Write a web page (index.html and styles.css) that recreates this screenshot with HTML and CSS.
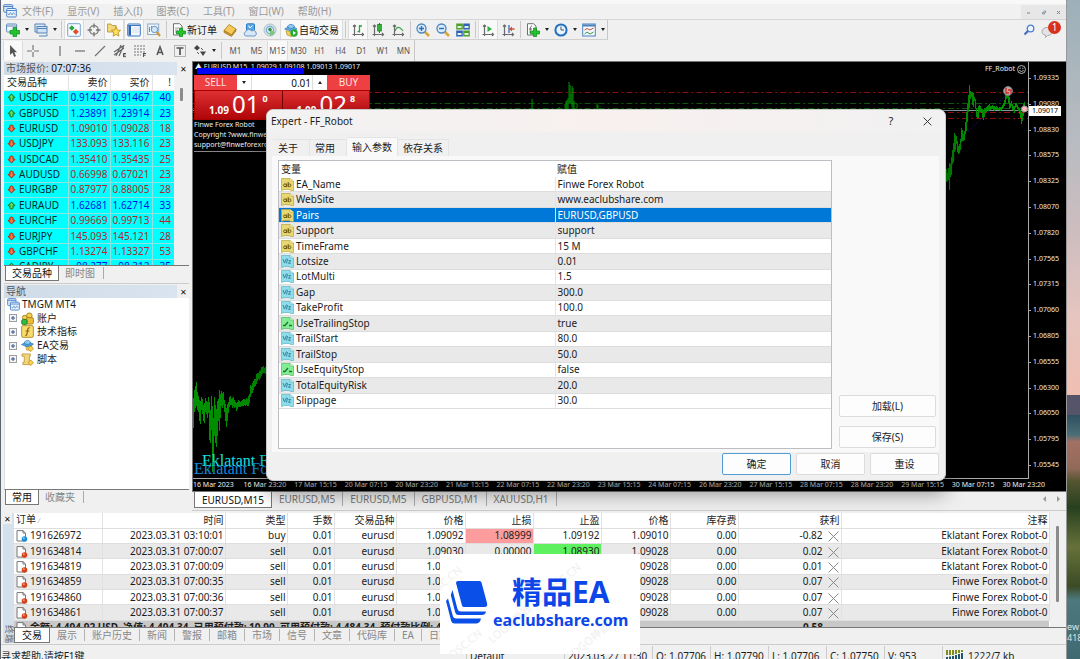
FILE: index.html
```
<!DOCTYPE html>
<html lang="zh-CN">
<head>
<meta charset="utf-8">
<title>TMGM MT4</title>
<link rel="stylesheet" href="styles.css">
</head>
<body>
<svg class="defs" aria-hidden="true">
  <symbol id="up" viewBox="0 0 10 10"><path d="M5 .5 9.5 5 7.5 6.5V8L5 9.7 2.5 8V6.500L.5 5Z" fill="#1c8a2c"/><path d="M5 2 7.500 5H6V8H4V5H2.500Z" fill="#5fe06a"/></symbol>
  <symbol id="down" viewBox="0 0 10 10"><path d="M5 9.500 9.500 5 7.500 3.500V2L5 .3 2.500 2V3.500L.5 5Z" fill="#b03a1c"/><path d="M5 8 7.500 5H6V2H4V5H2.500Z" fill="#ff7a50"/></symbol>
  <symbol id="ab" viewBox="0 0 13 13"><path d="M.5 .5H9L12.500 3V12.500H10L8 11.500H3L.5 12.500Z" fill="#e8d873" stroke="#b9a33c" stroke-width=".7"/><path d="M9 .5V3H12.500" fill="#fff7c0" stroke="#b9a33c" stroke-width=".5"/><circle cx="4" cy="7.300" r="1.400" fill="none" stroke="#6d5c12"/><path d="M5.600 5.500V9.100M7.200 4V9.100" stroke="#6d5c12"/><circle cx="8.500" cy="7.300" r="1.400" fill="none" stroke="#6d5c12"/></symbol>
  <symbol id="va" viewBox="0 0 13 13"><path d="M.5 .5H9L12.500 3V12.500H10L8 11.500H3L.5 12.500Z" fill="#8fdcea" stroke="#5cb4c6" stroke-width=".7"/><path d="M9 .5V3H12.500" fill="#d9f6fb" stroke="#4aa3b6" stroke-width=".5"/><path d="M2 4 3.500 8 5.500 3.500M5.500 8.500 6.500 4M7.500 5.500H9.500L7.500 8.300H9.800" fill="none" stroke="#2a7f96" stroke-width=".9"/></symbol>
  <symbol id="bool" viewBox="0 0 13 13"><path d="M.5 .5H9L12.500 3V12.500H10L8 11.500H3L.5 12.500Z" fill="#84ec94" stroke="#4fb860" stroke-width=".7"/><path d="M9 .5V3H12.500" fill="#d6fbdc" stroke="#4fb860" stroke-width=".5"/><path d="M2 8.500H4L7 5M8 8.500H11" fill="none" stroke="#17772a" stroke-width="1.300"/></symbol>
  <symbol id="buy" viewBox="0 0 12 12"><path d="M1 .6H7L9.500 3V11H1Z" fill="#fff" stroke="#777"/><path d="M7 .6V3H9.500" fill="none" stroke="#777"/><circle cx="8.500" cy="9" r="2.800" fill="#1e8fd8"/><circle cx="7.800" cy="8.200" r=".9" fill="#8ed4ff"/></symbol>
  <symbol id="sell" viewBox="0 0 12 12"><path d="M1 .6H7L9.500 3V11H1Z" fill="#fff" stroke="#777"/><path d="M7 .6V3H9.500" fill="none" stroke="#777"/><circle cx="8.500" cy="9" r="2.800" fill="#d5421b"/><circle cx="7.800" cy="8.200" r=".9" fill="#ffa27e"/></symbol>
  <symbol id="x" viewBox="0 0 10 10"><path d="M.5 .5 9.500 9.500M9.500 .5 .5 9.500" stroke="#888" fill="none" stroke-width=".9"/></symbol>
  <symbol id="plus" viewBox="0 0 8 8"><rect x=".5" y=".5" width="7" height="7" fill="#f4f4f4" stroke="#a0a0a0"/><path d="M2 4H6M4 2V6" stroke="#34549c"/></symbol>
  <symbol id="windows" viewBox="0 0 14 14"><rect x=".7" y=".7" width="9" height="7.500" rx="1" fill="#d7e8fa" stroke="#4f86c6"/><path d="M.7 2.500H9.700" stroke="#4f86c6"/><rect x="3.700" y="4.500" width="9.600" height="8.500" rx="1" fill="#eaf4ff" stroke="#4f86c6"/><path d="M3.700 6.500H13.300" stroke="#4f86c6"/><path d="M5 9.500 6 11 7.500 8.500 9 11 10.500 8.500 12 10.500" fill="none" stroke="#4f86c6" stroke-width=".8"/></symbol>
  <symbol id="axes" viewBox="0 0 14 14"><path d="M3.500 2V11.500H12.500M2 3.500 3.500 2 5 3.500M1.500 11.500H3.500V13M11 10 12.500 11.500 11 13" fill="none" stroke="#6b6b6b" stroke-width="1.200"/></symbol>
</svg>
<div class="desktop">
<div class="app">
  <header class="menubar">
    <svg class="i14"><use href="#windows"/></svg>
    <nav class="menu"><button>文件(F)</button><button>显示(V)</button><button>插入(I)</button><button>图表(C)</button><button>工具(T)</button><button>窗口(W)</button><button>帮助(H)</button></nav>
    <div class="winbtns"><button aria-label="最小化"><svg viewBox="0 0 15 14"><path d="M6 8H9" stroke="#789"/></svg></button><button aria-label="还原"><svg viewBox="0 0 15 14"><path d="M6.500 7.500H8.500V9H6.500ZM7.500 6H9.500V8" fill="none" stroke="#789" stroke-width=".8"/></svg></button><button aria-label="关闭"><svg viewBox="0 0 15 14"><path d="M6 6 9 9M9 6 6 9" stroke="#789"/></svg></button></div>
  </header>

  <div class="tools">
    <div class="bar first">
      <button class="tb" aria-label="新图表"><svg class="i14" viewBox="0 0 14 14"><rect x=".6" y="1" width="10" height="8" rx="1" fill="#eef6ff" stroke="#5f88b4"/><path d="M.6 3H10.600" stroke="#5f88b4"/><path d="M7 4.500H10.500V7.500H13.700V11H10.500V13.800H7V11H4V7.500H7Z" fill="#22c32e" stroke="#0d8a1a" stroke-width=".7"/></svg></button><i class="caret"></i>
      <button class="tb" aria-label="配置"><svg class="i14" viewBox="0 0 14 14"><path d="M1 9V1H11V3" fill="#dcebfb" stroke="#5583b5"/><rect x="3" y="3.500" width="10" height="6.500" fill="#cfe2f8" stroke="#5583b5"/><path d="M3 5.500H13M5 13H13V11M1 9H3" stroke="#5583b5" fill="none"/></svg></button><i class="caret"></i>
      <i class="sep"></i>
      <button class="tb on" aria-label="市场报价"><svg class="i14" viewBox="0 0 14 14"><rect x=".7" y=".7" width="12.600" height="12.600" rx="1" fill="#f6fbff" stroke="#77a3cf"/><path d="M4.800 2.200 7.600 5 4.800 7.800 2 5Z" fill="#26a83a"/><path d="M8.800 5.800 11.800 8.800 8.800 11.800 5.800 8.800Z" fill="#e0502a"/></svg></button>
      <button class="tb" aria-label="数据窗口"><svg class="i14" viewBox="0 0 14 14"><circle cx="7" cy="7" r="4.300" fill="none" stroke="#777" stroke-width="1.300"/><path d="M7 .5V5M7 9V13.500M.5 7H5M9 7H13.500" stroke="#777" stroke-width="1.300"/></svg></button>
      <button class="tb on" aria-label="导航"><svg class="i14" viewBox="0 0 14 14"><path d="M.5 1H4L5 2.500H9V9H.5Z" fill="#f4d87a" stroke="#b98f24" stroke-width=".8"/><path d="M9 3.800 10.400 7 13.600 7.300 11.200 9.600 11.900 13.200 9 11.400 6.100 13.200 6.800 9.600 4.400 7.300 7.600 7Z" fill="#ffe05c" stroke="#b98a12" stroke-width=".8"/></svg></button>
      <button class="tb on" aria-label="终端"><svg class="i14" viewBox="0 0 14 14"><rect x=".7" y="1" width="12.600" height="12" rx="1" fill="#f4f9ff" stroke="#3c78bd"/><path d="M1 2.500H13" stroke="#3c78bd"/><path d="M1.500 3H4V12.500H1.500Z" fill="#2b63b0"/><path d="M5.500 5H12M5.500 7H12M5.500 9H12" stroke="#d8dfe8"/></svg></button>
      <button class="tb" aria-label="策略测试"><svg class="i14" viewBox="0 0 14 14"><rect x=".7" y="1" width="11" height="10.500" fill="#eef5fc" stroke="#8da9c6"/><path d="M2.500 4V9M4.500 3V8" stroke="#789"/><circle cx="7.500" cy="6.500" r="3.200" fill="#cfe6fb" stroke="#6b93bd"/><path d="M9.700 9 13 13" stroke="#d5952a" stroke-width="2"/></svg></button>
      <i class="sep"></i>
      <button class="tb text"><svg class="i14" viewBox="0 0 14 14"><path d="M1.500 .7H7.500L10 3V12H1.500Z" fill="#fff" stroke="#707070"/><path d="M3 5H7M3 7H6M3 9H5" stroke="#999"/><path d="M7.500 5H10.500V8H13.500V11H10.500V13.700H7.500V11H4.500V8H7.500Z" fill="#22c32e" stroke="#0d8a1a" stroke-width=".7"/></svg>新订单</button>
      <button class="tb" aria-label="编辑器"><svg class="i14" viewBox="0 0 14 14"><path d="M1 7.500 6 1.500 13 6 8.500 12Z" fill="#f4c95a" stroke="#ab7a17" stroke-width=".8"/><path d="M1 7.500V9.500L8.500 13.500 13 8V6L8.500 12Z" fill="#d89a26" stroke="#9a6b14" stroke-width=".6"/></svg></button>
      <button class="tb" aria-label="账户"><svg class="i14" viewBox="0 0 14 14"><rect x="3.500" y=".8" width="8" height="7" rx="1" fill="#56a8ea" stroke="#2e78bc"/><path d="M5.500 2.500 7 5 9.500 2.500" stroke="#fff" fill="none"/><path d="M2.500 13A2.500 2.500 0 0 1 3 8.500 3 3 0 0 1 8.500 8 2.500 2.500 0 0 1 12 13Z" fill="#d7e8f8" stroke="#6b97c4"/></svg></button>
      <button class="tb" aria-label="信号"><svg class="i14" viewBox="0 0 14 14"><circle cx="7" cy="7" r="6" fill="#dbe6ec" stroke="#a8bfc8"/><circle cx="7" cy="7" r="3.700" fill="none" stroke="#75aed0" stroke-width="1.200"/><path d="M7 7V13A6 6 0 0 0 12 9Z" fill="#7cc77f"/><circle cx="7" cy="6.500" r="1.700" fill="#2f8f43"/></svg></button>
      <button class="tb text on"><svg class="i14" viewBox="0 0 14 14"><path d="M.7 6 4 4 10 4 13 6 7 8Z" fill="#62aee5" stroke="#2b76b5" stroke-width=".7"/><path d="M3.500 4C4 .5 10 .5 10.500 4L7 6Z" fill="#8dc9f2" stroke="#2b76b5" stroke-width=".7"/><path d="M2 7.500 7 9 12 7 11 12 7 13.500 3 12Z" fill="#f1cf59" stroke="#ad8420" stroke-width=".6"/><circle cx="10" cy="10" r="3.700" fill="#24a93a"/><path d="M9 8 12 10 9 12Z" fill="#fff"/></svg>自动交易</button>
      <i class="sep"></i>
      <button class="tb on" aria-label="柱状图"><svg class="i14" viewBox="0 0 14 14"><use href="#axes"/><path d="M8.500 2V9.500M8.500 3H11M6.500 8.500H8.500" stroke="#2da33c" stroke-width="1.300"/></svg></button>
      <button class="tb" aria-label="蜡烛图"><svg class="i14" viewBox="0 0 14 14"><use href="#axes"/><path d="M8.500 0V10" stroke="#15801f"/><rect x="6.700" y="1.500" width="3.600" height="6.500" fill="#2fb83d" stroke="#15801f" stroke-width=".8"/></svg></button>
      <button class="tb" aria-label="折线图"><svg class="i14" viewBox="0 0 14 14"><use href="#axes"/><path d="M4 8C6 3 8.500 3.500 12 8" fill="none" stroke="#3da54a" stroke-width="1.200"/></svg></button>
      <i class="sep"></i>
      <button class="tb" aria-label="放大"><svg class="i14" viewBox="0 0 14 14"><path d="M8.500 8.500 13 13" stroke="#d7a738" stroke-width="2.600"/><circle cx="5.500" cy="5.500" r="4.500" fill="#d8ebfb" stroke="#4a86c2" stroke-width="1.300"/><path d="M3 5.500H8M5.500 3V8" stroke="#2f6db0" stroke-width="1.400"/></svg></button>
      <button class="tb" aria-label="缩小"><svg class="i14" viewBox="0 0 14 14"><path d="M8.500 8.500 13 13" stroke="#d7a738" stroke-width="2.600"/><circle cx="5.500" cy="5.500" r="4.500" fill="#d8ebfb" stroke="#4a86c2" stroke-width="1.300"/><path d="M3 5.500H8" stroke="#2f6db0" stroke-width="1.400"/></svg></button>
      <button class="tb" aria-label="平铺窗口"><svg class="i14" viewBox="0 0 14 14"><path d="M.2 .5H6.800V6.500H.2ZM7.200 7.500H13.800V13.500H7.200Z" fill="#4ca02c"/><path d="M7.200 .5H13.800V6.500H7.200ZM.2 7.500H6.800V13.500H.2Z" fill="#2d62b5"/><path d="M1.500 3H5.500V5H1.500ZM8.500 3H12.500V5H8.500ZM1.500 10H5.500V12H1.500ZM8.500 10H12.500V12H8.500Z" fill="#e5f1e0"/></svg></button>
      <i class="sep"></i>
      <button class="tb on" aria-label="自动滚动"><svg class="i14" viewBox="0 0 14 14"><use href="#axes"/><path d="M6.500 3 11 6 6.500 9Z" fill="#2fb33e"/></svg></button>
      <button class="tb" aria-label="图表平移"><svg class="i14" viewBox="0 0 14 14"><use href="#axes"/><path d="M8 2V10" stroke="#3569b0" stroke-width="1.300"/><path d="M8 6 11 3.500V5.300H13.500V6.700H11V8.500Z" fill="#d1502c"/></svg></button>
      <i class="sep"></i>
      <button class="tb" aria-label="指标"><svg class="i14" viewBox="0 0 14 14"><path d="M1.500 .7H7.500L10 3V12H1.500Z" fill="#fff" stroke="#707070"/><path d="M6 3C4 3 4.500 6 4 10M3 6H6" stroke="#666" fill="none"/><path d="M7.500 5H10.500V8H13.500V11H10.500V13.700H7.500V11H4.500V8H7.500Z" fill="#22c32e" stroke="#0d8a1a" stroke-width=".7"/></svg></button><i class="caret"></i>
      <button class="tb" aria-label="周期"><svg class="i14" viewBox="0 0 14 14"><circle cx="7" cy="7" r="5.600" fill="#eaf4ff" stroke="#2370c0" stroke-width="2"/><path d="M7 3.500V7H10" fill="none" stroke="#456"/></svg></button><i class="caret"></i>
      <button class="tb" aria-label="模板"><svg class="i14" viewBox="0 0 14 14"><rect x=".7" y="1" width="12.600" height="12" fill="#f4f9ff" stroke="#4a82be"/><path d="M1 2.500H13" stroke="#4a82be" stroke-width="2"/><path d="M2.500 7 5 5.500 8 7 11.500 5" fill="none" stroke="#c0503a"/><path d="M2.500 11 5 9 8 11 11.500 9" fill="none" stroke="#38993f"/></svg></button><i class="caret"></i>
    </div>
    <div class="bar second">
      <button class="tb on" aria-label="光标"><svg class="i14" viewBox="0 0 14 14"><path d="M4 1V11L6.500 8.800 8.200 13 10 12 8.200 8.300H11Z" fill="#555"/></svg></button>
      <button class="tb" aria-label="十字准线"><svg class="i14" viewBox="0 0 14 14"><path d="M7 1V6M7 8V13M1 7H6M8 7H13" stroke="#777" stroke-width="1.200"/></svg></button>
      <i class="sep blank"></i>
      <button class="tb" aria-label="垂直线"><svg class="i14" viewBox="0 0 14 14"><path d="M7 2V12" stroke="#777" stroke-width="1.300"/></svg></button>
      <button class="tb" aria-label="水平线"><svg class="i14" viewBox="0 0 14 14"><path d="M2 7H12" stroke="#777" stroke-width="1.300"/></svg></button>
      <button class="tb" aria-label="趋势线"><svg class="i14" viewBox="0 0 14 14"><path d="M2 12 12 2" stroke="#777" stroke-width="1.300"/></svg></button>
      <button class="tb" aria-label="通道"><svg class="i14" viewBox="0 0 14 14"><path d="M1 8 10 2M1 11 11 4M3 12 8 1M6 12 11 1" stroke="#666" stroke-width="1.200"/><path d="M10.500 9V13M10.500 9.500H13M10.500 11H12.500M10.500 12.700H13" stroke="#555"/></svg></button>
      <button class="tb" aria-label="斐波那契"><svg class="i14" viewBox="0 0 14 14"><path d="M1 2H12M1 5H12M1 8H12M1 11H8" stroke="#777" stroke-dasharray="2 1"/><path d="M10.500 9V13M10.500 9.500H13M10.500 11.200H12.500" stroke="#555"/></svg></button>
      <button class="tb" aria-label="文字"><svg class="i14" viewBox="0 0 14 14"><path d="M4 11 7 3 10 11M5 8.500H9" fill="none" stroke="#555" stroke-width="1.500"/></svg></button>
      <button class="tb" aria-label="文字标签"><svg class="i14" viewBox="0 0 14 14"><rect x="1.500" y="1.500" width="11" height="11" fill="none" stroke="#777" stroke-dasharray="1 1"/><path d="M3.500 4H10.500M7 4V11" stroke="#555" stroke-width="1.700"/></svg></button>
      <button class="tb" aria-label="箭头"><svg class="i14" viewBox="0 0 14 14"><path d="M4 1 7 4 4 6.500 1 4ZM7 7.500H13L10 12Z" fill="#444"/><path d="M4 8 6 10M8 4 10 6" stroke="#555"/></svg></button><i class="caret"></i>
      <i class="sep"></i>
      <button class="tb tf">M1</button><button class="tb tf">M5</button><button class="tb tf on">M15</button><button class="tb tf">M30</button><button class="tb tf">H1</button><button class="tb tf">H4</button><button class="tb tf">D1</button><button class="tb tf">W1</button><button class="tb tf">MN</button>
    </div>
    <div class="right-tools">
      <svg class="i12" viewBox="0 0 12 12"><circle cx="7.500" cy="4.500" r="3.300" fill="#edf4ff" stroke="#4d7fd0" stroke-width="1.300"/><path d="M5 7 1.500 10.500" stroke="#3f6dc4" stroke-width="2.200"/></svg>
      <span class="chat"><svg class="i14" viewBox="0 0 14 14"><path d="M6 3.500C9.500 3.500 11.500 5 11.500 7.500S9 11.500 6.500 11.500L4.500 13.500 4.500 11.200C2 10.500 1 9.500 1 7.500S3 3.500 6 3.500Z" fill="#e4e4e4" stroke="#aaa"/></svg><b class="badge">1</b></span>
    </div>
  </div>

  <main class="work">
    <aside class="side">
      <section class="market">
        <div class="phead"><span>市场报价: <b>07:07:36</b></span><button aria-label="关闭">✕</button></div>
        <div class="mscroll">
          <table class="mtable">
            <colgroup><col class="c1"><col class="c2"><col class="c2"><col class="c3"></colgroup>
            <thead><tr><th>交易品种</th><th>卖价</th><th>买价</th><th>!</th></tr></thead>
            <tbody>
              <tr class="u"><td><svg><use href="#up"/></svg>USDCHF</td><td>0.91427</td><td>0.91467</td><td>40</td></tr>
              <tr class="u"><td><svg><use href="#up"/></svg>GBPUSD</td><td>1.23891</td><td>1.23914</td><td>23</td></tr>
              <tr><td><svg><use href="#down"/></svg>EURUSD</td><td>1.09010</td><td>1.09028</td><td>18</td></tr>
              <tr><td><svg><use href="#down"/></svg>USDJPY</td><td>133.093</td><td>133.116</td><td>23</td></tr>
              <tr><td><svg><use href="#down"/></svg>USDCAD</td><td>1.35410</td><td>1.35435</td><td>25</td></tr>
              <tr><td><svg><use href="#down"/></svg>AUDUSD</td><td>0.66998</td><td>0.67021</td><td>23</td></tr>
              <tr><td><svg><use href="#down"/></svg>EURGBP</td><td>0.87977</td><td>0.88005</td><td>28</td></tr>
              <tr class="u"><td><svg><use href="#up"/></svg>EURAUD</td><td>1.62681</td><td>1.62714</td><td>33</td></tr>
              <tr><td><svg><use href="#down"/></svg>EURCHF</td><td>0.99669</td><td>0.99713</td><td>44</td></tr>
              <tr><td><svg><use href="#down"/></svg>EURJPY</td><td>145.093</td><td>145.121</td><td>28</td></tr>
              <tr><td><svg><use href="#down"/></svg>GBPCHF</td><td>1.13274</td><td>1.13327</td><td>53</td></tr>
              <tr class="u"><td><svg><use href="#up"/></svg>CADJPY</td><td>98.277</td><td>98.312</td><td>35</td></tr>
            </tbody>
          </table>
          <i class="thumb"></i>
        </div>
        <div class="ptabs"><button class="active">交易品种</button><button>即时图</button></div>
      </section>
      <section class="navi">
        <div class="phead"><span>导航</span><button aria-label="关闭">✕</button></div>
        <div class="tree">
          <ul>
            <li class="root"><svg class="i13"><use href="#windows"/></svg>TMGM MT4</li>
            <li><svg class="pl"><use href="#plus"/></svg><svg class="i13" viewBox="0 0 14 14"><circle cx="9" cy="4" r="3" fill="#f3d050" stroke="#a97f16"/><rect x="5" y="6" width="8.500" height="7" rx="2" fill="#eabc35" stroke="#a97f16"/><circle cx="4" cy="6" r="2.500" fill="#f3d050" stroke="#a97f16"/><rect x=".7" y="8" width="6" height="5.500" rx="2" fill="#38b73e" stroke="#1f7d28"/></svg>账户</li>
            <li><svg class="pl"><use href="#plus"/></svg><svg class="i13" viewBox="0 0 14 14"><rect x=".7" y=".7" width="12.600" height="12.600" rx="1.500" fill="#f7dc70" stroke="#b48d23"/><path d="M9.500 3C6.500 2.500 7.500 7 6 11H4.500M5 6.500H9" fill="none" stroke="#8a5f0c" stroke-width="1.200"/></svg>技术指标</li>
            <li><svg class="pl"><use href="#plus"/></svg><svg class="i13" viewBox="0 0 14 14"><path d="M5 7 12 6 11 12 6 12Z" fill="#f1cf59" stroke="#ad8420" stroke-width=".6"/><path d="M.5 6 4 4 10 4 13.500 5.500 7 8.500Z" fill="#4f9fda" stroke="#2b76b5" stroke-width=".7"/><path d="M3.500 4.500C4 .5 10 .5 10.500 4.500L7 6Z" fill="#8dc9f2" stroke="#2b76b5" stroke-width=".7"/><path d="M10.500 7.500 13.500 10.500 10.500 13.500 7.500 10.500Z" fill="#f7d24e" stroke="#ad8420" stroke-width=".7"/></svg>EA交易</li>
            <li><svg class="pl"><use href="#plus"/></svg><svg class="i13" viewBox="0 0 14 14"><path d="M1 1H10V3.500H9V10H11V12.500H2V10H3.500V3.500H1Z" fill="#f4d67a" stroke="#b18c2f" stroke-width=".8"/><path d="M10.500 7.500 13.500 10.500 10.500 13.500 7.500 10.500Z" fill="#f7d24e" stroke="#ad8420" stroke-width=".7"/></svg>脚本</li>
          </ul>
        </div>
        <div class="ptabs"><button class="active">常用</button><button>收藏夹</button></div>
      </section>
    </aside>

    <section class="charts">
      <div class="chart">
        <div class="plot">
          <svg class="graph" viewBox="193 62 836 416" preserveAspectRatio="none">
            <g fill="none" stroke-width="1">
              <path d="M193 92.500H1029M193 112.500H1029M193 118.500H1029" stroke="#8f0d0d" stroke-dasharray="6 3 2 3"/>
              <path d="M193 103.500H1029M193 108.500H1029" stroke="#0b5c0b" stroke-dasharray="6 3 2 3"/>
              <path d="M193 110.500H1029" stroke="#8a939c"/>
              <path d="M194 151.500H270" stroke="#888"/>
              <path d="M960 140 1006 96" stroke="#15157a" stroke-dasharray="2 2"/>
              <path stroke="#009400" d="M193.500 398V428M194.500 390V412M195.500 386V408M196.500 382V406M197.500 392V410M198.500 396V412M199.500 400V421M200.500 401V424M201.500 397V410M202.500 399V414M203.500 405V421M204.500 403V423M205.500 398V412M206.500 401V414M207.500 402V418M208.500 397V413M209.500 402V440M210.500 410V443M211.500 396V430M212.500 406V472M213.500 418V462M214.500 397V436M215.500 405V443M216.500 409V447M217.500 401V436M218.500 399V421M219.500 390V431M220.500 394V418M221.500 391V406M222.500 393V408M223.500 392V405M224.500 400V412M225.500 404V421M226.500 408V427M227.500 404V421M228.500 402V413M229.500 397V407M230.500 396V405M231.500 399V405M232.500 398V408M233.500 397V406M234.500 400V408M235.500 402V407M236.500 403V411M237.500 402V409M238.500 400V407M239.500 401V407M240.500 402V407M241.500 401V406M242.500 400V406M243.500 399V406M244.500 399V405M245.500 400V406M246.500 398V405M247.500 399V406M248.500 396V406M249.500 394V403M250.500 385V397M251.500 386V394M252.500 383V393M253.500 381V390M254.500 379V387M255.500 379V386M256.500 374V384M257.500 373V381M258.500 373V379M259.500 371V380M260.500 370V378M261.500 367V376M262.500 367V374M263.500 366V373M264.500 368V373M265.500 367V374M266.500 366V373
              M532.500 99V110M559.500 107V110M565.500 104V110M566.500 101V110M567.500 100V110M568.500 98V110M569.500 82V104M570.500 85V103M571.500 94V104M572.500 86V107M573.500 88V110M574.500 101V110M577.500 103V110M597.500 103V110M598.500 105V110
              M946.500 167V176M947.500 169V182M948.500 173V181M949.500 168V180M950.500 163V190M951.500 164V177M952.500 157V175M953.500 150V164M954.500 143V162M955.500 133V152M956.500 135V150M957.500 136V144M958.500 141V152M959.500 146V154M960.500 144V153M961.500 139V150M962.500 128V142M963.500 130V141M964.500 134V141M965.500 131V140M966.500 122V134M967.500 112V131M968.500 104V122M969.500 95V112M970.500 85V108M971.500 91V99M972.500 92V97M973.500 92V105M974.500 93V107M975.500 97V101M976.500 99V109M977.500 108V117M978.500 112V118M979.500 106V118M980.500 105V112M981.500 106V112M982.500 109V113M983.500 109V118M984.500 110V120M985.500 108V117M986.500 109V113M987.500 107V112M988.500 106V111M989.500 105V111M990.500 104V110M991.500 106V110M992.500 106V109M993.500 105V109M994.500 106V110M995.500 106V111M996.500 107V110M997.500 106V110M998.500 107V110M999.500 108V110M1000.500 107V110M1001.500 107V111M1002.500 107V110M1003.500 105V109M1004.500 103V108M1005.500 100V106M1006.500 94V104M1007.500 87V99M1008.500 88V98M1009.500 91V103M1010.500 97V109M1011.500 103V108M1012.500 101V106M1013.500 104V110M1014.500 106V111M1015.500 106V113M1016.500 103V108M1017.500 103V107M1018.500 105V109M1019.500 107V111M1020.500 108V114M1021.500 110V118M1022.500 112V124M1023.500 113V121M1024.500 104V116M1025.500 102V112"/>
              <circle cx="1009" cy="91" r="4.500" fill="#b5aaaa" stroke="#777"/><path d="M1007 88V93H1010M1009 90H1012V94" stroke="#d22" stroke-width="1.300"/>
              <circle cx="1025.500" cy="109" r="3" fill="#f7b9b9" stroke="#999"/>
            </g>
          </svg>
          <div class="ctitle"><span>▲ EURUSD,M15&nbsp; 1.09029 1.09108 1.09013 1.09017</span><span class="expert">FF_Robot <svg class="i9" viewBox="0 0 10 10"><g fill="none" stroke="#ddd" stroke-width=".9"><circle cx="5" cy="5" r="4.400"/><path d="M2.500 6Q5 8.500 7.500 6M3.500 3V4.500M6.500 3V4.500"/></g></svg></span></div>
          <div class="bluebar"></div>
          <div class="oneclick">
            <div class="oc-top"><button class="oc-btn">SELL</button><button class="spin" aria-label="减少"><i class="caret"></i></button><input aria-label="手数" value="0.01"><button class="spin" aria-label="增加"><i class="caret flip"></i></button><button class="oc-btn">BUY</button></div>
            <div class="oc-prices"><div><small>1.09</small><big>01</big><sup>0</sup></div><div><small>1.09</small><big>02</big><sup>8</sup></div></div>
          </div>
          <p class="note">Finwe Forex Robot<br>Copyright ?www.finweforexrobot.com<br>support@finweforexrobot.com</p>
          <div class="ek1">Eklatant Forex</div>
          <div class="ek2">Eklatant Forex Robot</div>
        </div>
        <div class="yaxis"><span>1.09335</span><span>1.09080</span><span>1.08830</span><span>1.08575</span><span>1.08325</span><span>1.08070</span><span>1.07820</span><span>1.07565</span><span>1.07315</span><span>1.07060</span><span>1.06805</span><span>1.06555</span><span>1.06300</span><span>1.06050</span><span>1.05795</span><span>1.05545</span><b>1.09017</b></div>
        <div class="xaxis"><span>16 Mar 2023</span><span>16 Mar 23:20</span><span>17 Mar 15:15</span><span>20 Mar 07:15</span><span>20 Mar 23:20</span><span>21 Mar 15:15</span><span>22 Mar 07:15</span><span>22 Mar 23:20</span><span>23 Mar 15:15</span><span>24 Mar 07:15</span><span>26 Mar 23:20</span><span>27 Mar 15:15</span><span>28 Mar 07:15</span><span>28 Mar 23:20</span><span>29 Mar 15:15</span><span>30 Mar 07:15</span><span>30 Mar 23:20</span></div>
      </div>
      <div class="ctabs"><button class="active">EURUSD,M15</button><button>EURUSD,M5</button><button>EURUSD,M5</button><button>GBPUSD,M1</button><button>XAUUSD,H1</button><span class="arrows"><i></i><i class="r"></i></span></div>
    </section>
  </main>

  <section class="terminal">
    <div class="tstrip"><button aria-label="关闭">✕</button><span>终端</span></div>
    <div class="tbody">
      <div class="tscroll">
        <table class="ttable">
          <colgroup><col class="w88"><col class="w123"><col class="w62"><col class="w47"><col class="w62"><col class="w69"><col class="w68"><col class="w68"><col class="w69"><col class="w68"><col class="w103"><col class="w208"></colgroup>
          <thead><tr><th>订单 <small>⁄</small></th><th>时间</th><th>类型</th><th>手数</th><th>交易品种</th><th>价格</th><th>止损</th><th>止盈</th><th>价格</th><th>库存费</th><th>获利</th><th>注释</th></tr></thead>
          <tbody>
            <tr><td><svg><use href="#buy"/></svg>191626972</td><td>2023.03.31 03:10:01</td><td>buy</td><td>0.01</td><td>eurusd</td><td>1.09092</td><td class="sl">1.08999</td><td>1.09192</td><td>1.09010</td><td>0.00</td><td>-0.82<svg><use href="#x"/></svg></td><td>Eklatant Forex Robot-0</td></tr>
            <tr><td><svg><use href="#sell"/></svg>191634814</td><td>2023.03.31 07:00:07</td><td>sell</td><td>0.01</td><td>eurusd</td><td>1.09030</td><td>0.00000</td><td class="tp">1.08930</td><td>1.09028</td><td>0.00</td><td>0.02<svg><use href="#x"/></svg></td><td>Eklatant Forex Robot-0</td></tr>
            <tr><td><svg><use href="#sell"/></svg>191634819</td><td>2023.03.31 07:00:09</td><td>sell</td><td>0.01</td><td>eurusd</td><td>1.09030</td><td></td><td></td><td>1.09028</td><td>0.00</td><td>0.01<svg><use href="#x"/></svg></td><td>Eklatant Forex Robot-0</td></tr>
            <tr><td><svg><use href="#sell"/></svg>191634859</td><td>2023.03.31 07:00:35</td><td>sell</td><td>0.01</td><td>eurusd</td><td>1.09035</td><td></td><td></td><td>1.09028</td><td>0.00</td><td>0.07<svg><use href="#x"/></svg></td><td>Finwe Forex Robot-0</td></tr>
            <tr><td><svg><use href="#sell"/></svg>191634860</td><td>2023.03.31 07:00:36</td><td>sell</td><td>0.01</td><td>eurusd</td><td>1.09035</td><td></td><td></td><td>1.09028</td><td>0.00</td><td>0.07<svg><use href="#x"/></svg></td><td>Finwe Forex Robot-0</td></tr>
            <tr><td><svg><use href="#sell"/></svg>191634861</td><td>2023.03.31 07:00:37</td><td>sell</td><td>0.01</td><td>eurusd</td><td>1.09035</td><td></td><td></td><td>1.09028</td><td>0.00</td><td>0.07<svg><use href="#x"/></svg></td><td>Finwe Forex Robot-0</td></tr>
            <tr class="sum"><td colspan="10"><svg><use href="#sell"/></svg>余额: 4 494.92 USD&nbsp; 净值: 4 494.34&nbsp; 已用预付款: 10.90&nbsp; 可用预付款: 4 484.34&nbsp; 预付款比例: 41232.48%</td><td>-0.58</td><td></td></tr>
          </tbody>
        </table>
        <i class="thumb tall"></i>
      </div>
      <div class="ttabs"><button class="active">交易</button><button>展示</button><button>账户历史</button><button>新闻</button><button>警报</button><button>邮箱</button><button>市场</button><button>信号</button><button>文章</button><button>代码库</button><button>EA</button><button>日志</button></div>
    </div>
  </section>

  <footer class="status">
    <span class="help">寻求帮助,请按F1键</span><span class="prof">Default</span><span class="date">2023.03.27 11:30</span><span>O: 1.07706</span><span>H: 1.07790</span><span>L: 1.07706</span><span>C: 1.07750</span><span>V: 953</span><span class="net"><svg viewBox="0 0 19 14"><path d="M1 1V6M4 1V6M7 1V6M10 1V5M13 1V4M16 1V3" stroke="#7d8c1c" stroke-width="2"/><path d="M1 8V14M4 7.500V14M7 7V14M10 6V14M13 5V14M16 4V14" stroke="#1f5570" stroke-width="2"/></svg>1222/7 kb</span>
  </footer>

  <div class="dialog" role="dialog" aria-labelledby="dt">
    <div class="dtitle"><span id="dt">Expert - FF_Robot</span><button class="q">?</button><button aria-label="关闭"><svg class="i9" viewBox="0 0 10 10"><path d="M.7 .7 9.300 9.300M9.300 .7 .7 9.300" stroke="#222" fill="none"/></svg></button></div>
    <div class="dtabs"><button>关于</button><button>常用</button><button class="active">输入参数</button><button>依存关系</button></div>
    <div class="dpanel">
      <div class="dlist">
        <table>
          <thead><tr><th>变量</th><th>赋值</th></tr></thead>
          <tbody>
            <tr><td><svg><use href="#ab"/></svg>EA_Name</td><td>Finwe Forex Robot</td></tr>
            <tr><td><svg><use href="#ab"/></svg>WebSite</td><td>www.eaclubshare.com</td></tr>
            <tr class="sel"><td><svg><use href="#ab"/></svg>Pairs</td><td>EURUSD,GBPUSD</td></tr>
            <tr><td><svg><use href="#ab"/></svg>Support</td><td>support</td></tr>
            <tr><td><svg><use href="#ab"/></svg>TimeFrame</td><td>15 M</td></tr>
            <tr><td><svg><use href="#va"/></svg>Lotsize</td><td>0.01</td></tr>
            <tr><td><svg><use href="#va"/></svg>LotMulti</td><td>1.5</td></tr>
            <tr><td><svg><use href="#va"/></svg>Gap</td><td>300.0</td></tr>
            <tr><td><svg><use href="#va"/></svg>TakeProfit</td><td>100.0</td></tr>
            <tr><td><svg><use href="#bool"/></svg>UseTrailingStop</td><td>true</td></tr>
            <tr><td><svg><use href="#va"/></svg>TrailStart</td><td>80.0</td></tr>
            <tr><td><svg><use href="#va"/></svg>TrailStop</td><td>50.0</td></tr>
            <tr><td><svg><use href="#bool"/></svg>UseEquityStop</td><td>false</td></tr>
            <tr><td><svg><use href="#va"/></svg>TotalEquityRisk</td><td>20.0</td></tr>
            <tr><td><svg><use href="#va"/></svg>Slippage</td><td>30.0</td></tr>
          </tbody>
        </table>
      </div>
      <div class="dside"><button class="btn">加载(L)</button><button class="btn">保存(S)</button></div>
    </div>
    <div class="dfoot"><button class="btn primary">确定</button><button class="btn">取消</button><button class="btn">重设</button></div>
  </div>

  <div class="brand">
    <span class="ghost g1">LOGOSC.CN</span><span class="ghost g2">LOGO神器 LOGOSC.CN</span><span class="ghost g3">LOGOSC.CN</span><span class="ghost g4">LOGO神器</span>
    <svg viewBox="0 0 42 43"><path d="M12 0H33.500Q35 0 35.500 1.500L41 22Q42 26 38.500 26H18Q16.500 26 16 24.500L10 2Q10 0 12 0Z" fill="#0a4fe8"/><path d="M6.500 9 11.500 28Q12.300 30.500 15 30.500H40Q39.500 34 35.500 34H12.500Q10 34 9.200 31.500L4.800 14ZM2 17.500 7 35.500Q7.800 37.500 10 37.500H35Q34 42.500 30 42.500H8.500Q6 42.500 5.200 40L0 20Z" fill="#0a4fe8"/></svg>
    <div class="btext"><strong>精品EA</strong><b>eaclubshare.com</b></div>
  </div>
</div>
<div class="wall"><span>ew<br>418</span></div>
</div>
</body>
</html>
```
FILE: styles.css
```
* { box-sizing: border-box; }
html, body { height: 100%; }
body { margin: 0; overflow: hidden; font: 10px/14px "Noto Sans", "Noto Sans CJK SC", sans-serif; color: #1c1c1c; }
button, input { font: inherit; color: inherit; border: 0; padding: 0; margin: 0; background: none; border-radius: 0; }
table { border-collapse: collapse; table-layout: fixed; width: 100%; }
th, td { padding: 0; font-weight: 400; white-space: nowrap; overflow: hidden; line-height: 13px; }
th { height: 15px; }
.defs { position: absolute; width: 0; height: 0; }
.i14 { width: 14px; height: 14px; flex: none; }
.i13 { width: 13px; height: 13px; flex: none; }
.i12 { width: 12px; height: 12px; flex: none; }
.i9 { width: 9px; height: 9px; flex: none; }

.desktop { display: flex; height: 100vh; background: #5d666e; padding-left: 1px; }
.app { flex: 1; min-width: 0; position: relative; display: flex; flex-direction: column; background: #f0f0f0; }
.wall { width: 14px; flex: none; overflow: hidden; display: flex; align-items: flex-end; padding-bottom: 16px; color: #dde6e8; font-size: 9px; line-height: 11px;
  background: linear-gradient(#9db0b9 0, #b9bcc1 22%, #cdbdbf 35%, #e5c5bf 48%, #f0bfb2 60%, #56546a 60%, #565468 63%, #2f5060 63%, #4b6f78 66%, #a27064 67%, #936a5a 71%, #555531 73%, #28401f 77%, #66713a 83%, #3b4b25 89%, #4d787d 91%, #3f6a72 100%);
  border-left: 1px solid #999; }

/* menu */
.menubar { display: flex; align-items: center; height: 20px; padding: 2px 0 0 2px; gap: 5px; border-bottom: 1px solid #d5d5d5; background: linear-gradient(#f8f8f8 0 4px, #f1f1f1 4px); }
.menu { display: flex; gap: 14px; flex: 1; color: #999; line-height: 16px; }
.winbtns { display: flex; align-self: flex-end; background: #e7e7e7; }
.winbtns button { width: 15px; height: 14px; }
.winbtns svg { display: block; width: 15px; height: 14px; }

/* toolbars */
.tools { position: relative; height: 41px; flex: none; }
.bar { display: flex; align-items: center; width: max-content; height: 20px; padding-left: 2px; border-right: 1px solid #c8c8c8; border-bottom: 1px solid #d0d0d0; }
.bar.second { border-bottom: 0; height: 21px; }
.tb { width: 20px; height: 19px; display: flex; align-items: center; justify-content: center; flex: none; color: #111; }
.tb.on { background: #f9f9f9; border: 1px solid #dcdcdc; border-width: 0 1px; }
.tb.text { width: auto; padding: 0 3px; gap: 1px; }
.tb.tf { width: 21px; font-size: 8px; color: #555; }
.bar .caret { width: 8px; }
.caret { width: 9px; flex: none; display: flex; justify-content: center; }
.caret::before { content: ""; border: 2px solid transparent; border-top: 3px solid #222; border-bottom: 0; }
.caret.flip::before { border-top: 0; border-bottom: 3px solid #222; }
.sep { width: 1px; height: 17px; flex: none; background: #c8c8c8; margin: 0 2px; }
.second .sep { margin: 0 3px; }
.sep.blank { background: none; }
.right-tools { position: absolute; right: 8px; top: 4px; display: flex; gap: 6px; align-items: flex-start; }
.chat { position: relative; display: flex; padding-right: 3px; }
.badge { position: absolute; right: -3px; top: -3px; width: 13px; height: 13px; border-radius: 50%; background: #d9301a; color: #fff; text-align: center; font: 10px/13px "Noto Sans", sans-serif; }

/* workspace */
.work { flex: 1; min-height: 0; display: flex; gap: 3px; padding-left: 3px; }
.side { width: 185px; flex: none; display: flex; flex-direction: column; padding-top: 1px; }
.phead { display: flex; height: 13px; line-height: 12px; }
.phead span { flex: 1; padding-left: 2px; color: #555; background: linear-gradient(90deg, #d0dbe8, #d9e4f0); }
.phead b { font-weight: 400; color: #111; }
.phead button { width: 12px; font-size: 8px; text-align: center; color: #111; }
.market { display: flex; flex-direction: column; flex: none; height: 222px; border-bottom: 1px solid #ccc; margin-bottom: 1px; }
.mscroll { display: flex; height: 191px; overflow: hidden; align-items: flex-start; border-bottom: 1px solid #777; }
.mtable { width: 170px; height: 200px; flex: none; }
.mtable .c1 { width: 64px; } .mtable .c2 { width: 42px; } .mtable .c3 { width: 22px; }
.mtable th, .mtable td { text-align: right; padding-right: 2px; border-right: 1px solid #8fe3e3; border-bottom: 1px solid #8fe3e3; color: #b5262b; }
.mtable th { background: #fff; color: #222; border-color: #e4e4e4; }
.mtable td { background: #0ff; }
.mtable tr > :first-child { text-align: left; padding-left: 3px; color: #0b2a2a; }
.mtable .u td { color: #0014e6; }
.mtable .u td:first-child { color: #0b2a2a; }
.mtable tr > :last-child { border-right: 0; padding-right: 3px; }
.mtable svg { width: 9px; height: 9px; vertical-align: -1px; margin-right: 3px; }
.thumb { width: 3px; height: 13px; margin: 13px 0 0 6px; border-radius: 1px; background: #8b8b8b; }
.ptabs { display: flex; height: 15px; line-height: 14px; }
.ptabs button { padding: 0 6px; color: #888; }
.ptabs button.active { color: #111; background: #fff; border: 1px solid #777; border-top: 0; margin-left: 1px; }
.ptabs button:last-child { border-right: 1px solid #aaa; height: 12px; margin-top: 1px; line-height: 12px; padding-right: 8px; }
.navi { flex: 1; min-height: 0; display: flex; flex-direction: column; padding-bottom: 6px; }
.tree { flex: 1; background: #fff; border-bottom: 1px solid #777; border-left: 1px solid #ddd; }
.tree ul { list-style: none; margin: 0; padding: 0 0 0 2px; height: 68px; display: grid; grid-template-rows: repeat(5, 1fr); }
.tree li { display: flex; align-items: center; gap: 3px; padding-left: 2px; line-height: 13px; }
.tree li.root { padding-left: 0; gap: 2px; }
.tree .pl { width: 8px; height: 8px; margin-right: 1px; }
.charts { flex: 1; min-width: 0; display: flex; flex-direction: column; }
.chart { flex: 1; min-height: 0; display: grid; grid-template: 1fr 12px / 1fr 37px; background: #000; border: 1px solid #777; border-right: 0; color: #eee; font-size: 7px; line-height: 10px; }
.plot { position: relative; overflow: hidden; border-right: 1px solid #aaa; border-bottom: 1px solid #aaa; }
.graph { position: absolute; inset: 0; width: 100%; height: 100%; }
.ctitle { position: relative; display: flex; justify-content: space-between; height: 12px; padding: 0 2px; }
.expert { display: flex; gap: 2px; align-items: center; padding-top: 2px; }
.bluebar { position: absolute; left: 4px; top: 6px; width: 107px; height: 6px; background: #00f; }
.oneclick { position: relative; width: 176px; margin: 1px 0 0 1px; color: #fff; }
.oc-top { display: flex; height: 15px; background: #fff; }
.oc-btn { width: 43px; font-size: 10px; line-height: 15px; background: #ee3f42; color: #ffe1e1; }
.oc-top input { flex: 1; min-width: 0; font-size: 10px; text-align: right; color: #111; padding-right: 1px; border: 1px solid #ddd; border-width: 0 1px; }
.spin { width: 14px; display: flex; align-items: center; justify-content: center; }
.oc-prices { display: grid; grid-template-columns: 1fr 1fr; gap: 1px; background: #700; border: 1px solid #a00; }
.oc-prices div { display: flex; align-items: flex-end; justify-content: center; height: 28px; padding-bottom: 3px; gap: 3px; background: linear-gradient(#dc3033, #b00509); }
.oc-prices small { font: 700 10px/11px "Noto Sans", sans-serif; }
.oc-prices big { font: 24px/24px "Noto Sans", sans-serif; }
.oc-prices sup { font: 700 9px/10px "Noto Sans", sans-serif; align-self: flex-start; margin-top: 3px; }
.note { position: relative; margin: 0 0 0 1px; white-space: nowrap; }
.ek1, .ek2 { position: absolute; font: 16px/16px "Liberation Serif", serif; white-space: nowrap; }
.ek1 { left: 9px; bottom: 9px; color: #15e0e0; }
.ek2 { left: 1px; bottom: 1px; color: #1489d8; }
.yaxis { position: relative; display: flex; flex-direction: column; justify-content: space-between; padding: 11px 0 9px 4px; }
.yaxis span { position: relative; }
.yaxis span::before { content: ""; position: absolute; left: -4px; top: 5px; width: 2px; height: 1px; background: #aaa; }
.yaxis b { position: absolute; left: 0; top: 44px; padding: 0 3px; background: #fff; color: #000; font-weight: 400; }
.xaxis { grid-column: 1 / 3; display: grid; grid-template-columns: repeat(17, 1fr); padding-right: 13px; line-height: 12px; white-space: nowrap; }
.ctabs { display: flex; height: 19px; padding: 0 6px 2px 2px; background: #efefef; border-bottom: 1px solid #ccc; }
.ctabs button { padding: 0 7px; color: #777; border-right: 1px solid #aaa; line-height: 14px; height: 14px; }
.ctabs button.active { height: 16px; background: #fff; color: #111; border: 1px solid #777; border-top: 0; }
.arrows { margin-left: auto; display: flex; gap: 11px; padding-top: 4px; }
.arrows i { height: 6px; border: 3px solid transparent; border-left: 0; border-right: 3px solid #999; }
.arrows i.r { border-right: 0; border-left: 3px solid #999; }

/* terminal */
.terminal { display: flex; padding: 2px 0 1px 2px; flex: none; border-bottom: 1px solid #ccc; }
.tstrip { width: 11px; flex: none; display: flex; flex-direction: column; background: #d4e0ec; color: #666; }
.tstrip button { height: 11px; width: 9px; font-size: 8px; line-height: 9px; background: #f0f0f0; color: #111; }
.tstrip span { margin-top: auto; writing-mode: vertical-rl; text-orientation: sideways; line-height: 10px; font-size: 9px; }
.tbody { flex: 1; min-width: 0; }
.tscroll { display: flex; height: 115px; overflow: hidden; padding-right: 8px; border-bottom: 1px solid #777; }
.ttable { height: 123px; flex: 1; min-width: 0; background: #fff; }
.w88 { width: 88px; } .w123 { width: 123px; } .w62 { width: 62px; } .w47 { width: 47px; } .w69 { width: 69px; } .w68 { width: 68px; } .w103 { width: 103px; } .w208 { width: 208px; }
.ttable th, .ttable td { text-align: right; padding-right: 1px; border-right: 1px solid #e2e2e2; border-bottom: 1px solid #dedede; }
.ttable tr > :first-child { text-align: left; padding-left: 2px; }
.ttable th small { color: #aaa; font-size: 7px; }
.ttable tbody tr:nth-child(even) { background: #e9e9e9; }
.ttable svg { width: 12px; height: 12px; vertical-align: -3px; margin: 0 2px 0 0; }
.ttable td:nth-child(11) svg { width: 11px; height: 11px; margin: 0 1px 0 5px; }
.ttable .sl { background: #fc9c9c; }
.ttable .tp { background: #5ef05e; }
.ttable .sum td { background: #c8c8c8; font-weight: 700; border-right: 0; }
.ttable .sum td:nth-child(2) { padding-right: 18px; }
.thumb.tall { height: 76px; margin: 13px 0 0 6px; flex: none; }
.ttabs { display: flex; height: 15px; line-height: 14px; }
.ttabs button { padding: 0 7px; border-right: 1px solid #b4b4b4; height: 12px; margin-top: 1px; line-height: 12px; color: #888; }
.ttabs button.active { height: 15px; margin-top: 0; background: #fff; color: #111; border: 1px solid #777; border-top: 0; }

/* status */
.status { display: flex; flex: none; height: 14px; line-height: 20px; white-space: nowrap; overflow: hidden; padding-top: 1px; }
.status span { width: 58px; padding-left: 3px; border-left: 1px solid #ccc; flex: none; }
.status .help { width: 465px; padding-left: 0; border: 0; }
.status .prof { width: 98px; }
.status .date { width: 88px; }
.status .net { flex: 1; display: flex; gap: 3px; padding-left: 3px; }
.status svg { width: 19px; height: 14px; margin-top: 3px; }

/* expert settings dialog */
.dialog { position: absolute; left: 265px; top: 109px; width: 680px; display: flex; flex-direction: column; padding: 0 6px 0 5px; background: #f0f0f0; border: 1px solid #c9c9c9; border-radius: 7px; box-shadow: 0 12px 20px rgba(0,0,0,.4); }
.dtitle { display: flex; align-items: center; height: 22px; margin: 0 -6px 0 -5px; padding: 0 13px 0 4px; border-radius: 7px 7px 0 0; background: linear-gradient(90deg, #f2f2f2, #f7f0ef 50%, #f1f1f1); }
.dtitle span { flex: 1; }
.dtitle button { display: flex; width: 10px; justify-content: center; }
.dtitle .q { margin-right: 26px; font-size: 11px; }
.dtabs { display: flex; align-items: flex-end; height: 24px; padding-left: 1px; }
.dtabs button { height: 17px; padding: 0 5px; line-height: 17px; border: 1px solid #e4e4e4; border-width: 1px 1px 0 0; min-width: 37px; text-align: left; }
.dtabs button.active { height: 19px; background: #f9f9f9; }
.dpanel { display: flex; gap: 7px; padding: 4px 3px 3px 6px; background: #f9f9f9; }
.dlist { flex: 1; height: 289px; border: 1px solid #bdbdc4; background: #fff; }
.dlist table { height: 248px; }
.dlist th { height: 16px; }
.dlist th, .dlist td { text-align: left; padding-left: 2px; border-bottom: 1px solid #ddd; }
.dlist tr > :first-child { border-right: 1px solid #e4e4e4; }
.dlist thead th, .dlist thead th:first-child { border: 0; }
.dlist tbody tr:nth-child(even) { background: #e9e9e9; }
.dlist tbody tr.sel { background: #0078d7; color: #fff; }
.dlist svg { width: 13px; height: 13px; vertical-align: -3px; margin: 0 2px 0 0; }
.dside { width: 97px; display: flex; flex-direction: column; justify-content: flex-end; gap: 9px; padding-bottom: 1px; }
.btn { height: 22px; background: #fdfdfd; border: 1px solid #dcdcdc; border-radius: 2px; }
.dfoot { display: flex; justify-content: flex-end; gap: 5px; padding: 1px 0 5px; }
.dfoot .btn { width: 69px; }
.btn.primary { border-color: #4f9fd6; }

/* brand plate */
.brand { position: absolute; left: 439px; bottom: 5px; width: 200px; height: 100px; display: flex; align-items: center; gap: 5px; padding: 0 12px 4px 6px; background: #fff; overflow: hidden; color: #0d46e8; }
.brand > svg { width: 42px; height: 43px; flex: none; }
.btext { position: relative; display: flex; flex-direction: column; align-items: center; flex: 1; }
.btext strong { font: 700 30px/36px "Noto Sans", "Noto Sans CJK SC", sans-serif; }
.btext b { font: 700 16px/20px "Noto Sans", sans-serif; }
.ghost { position: absolute; color: #f0f0f0; transform: rotate(-40deg); white-space: nowrap; font-size: 11px; }
.g1 { left: -34px; top: 27px; }
.g2 { left: 36px; top: 42px; }
.g3 { left: -14px; top: 90px; }
.g4 { left: 122px; top: 80px; }
```
